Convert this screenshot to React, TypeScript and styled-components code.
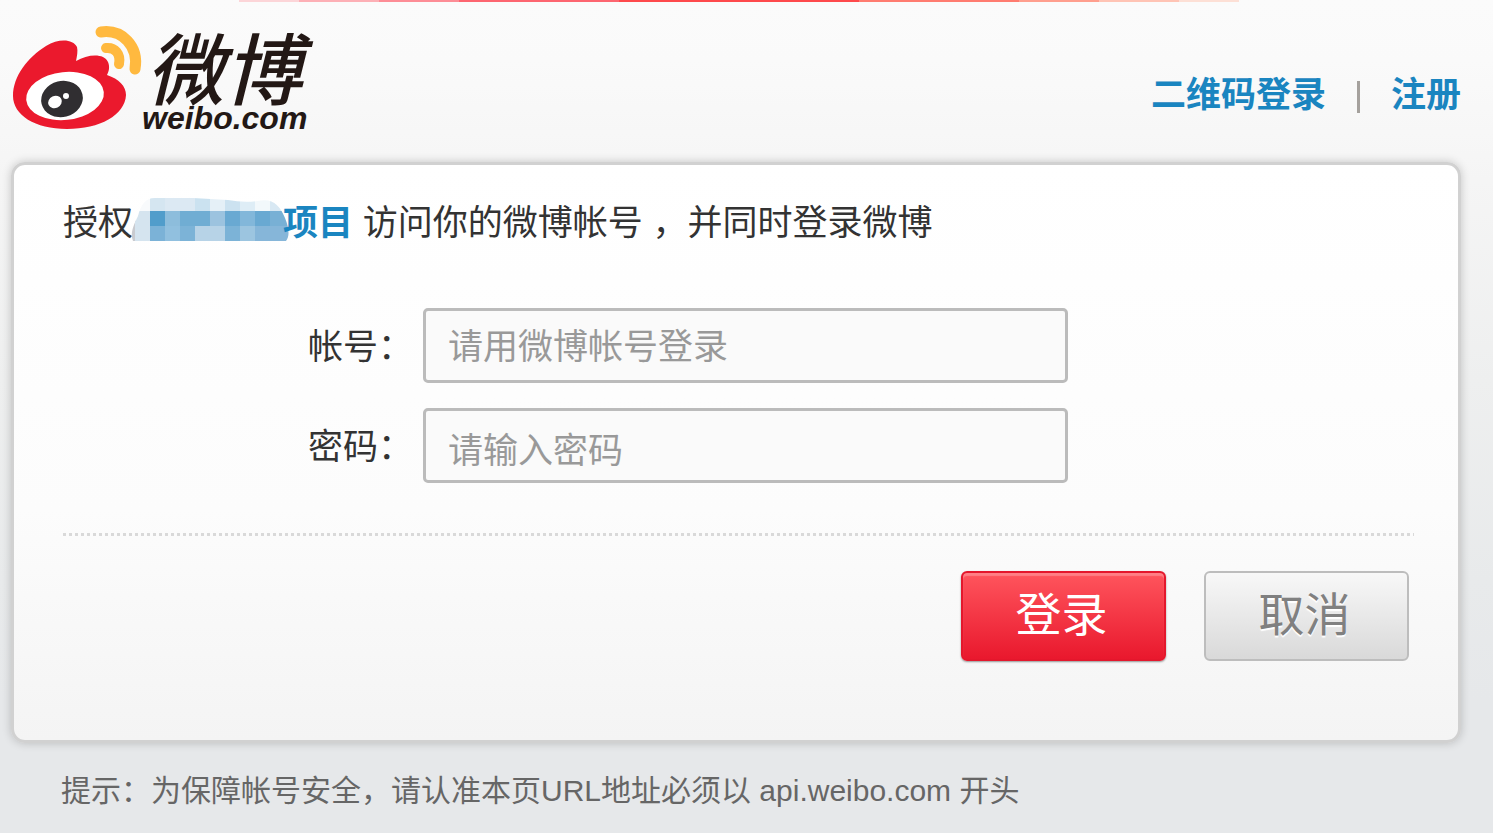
import React from "react";
import styled, { createGlobalStyle, css } from "styled-components";

const GlobalStyle = createGlobalStyle`
  * { box-sizing: border-box; }
  html { min-height: 100%; background: #e6e8ea; }
  body {
    margin: 0;
    font-family: "Liberation Sans", "Noto Sans CJK SC", sans-serif;
    color: #333;
  }
`;

const Page = styled.div`
  min-height: 100vh;
  background: linear-gradient(#fbfbfb 0, #fafafa 60px, #f5f5f5 180px, #eeefef 380px, #e8eaeb 580px, #e6e8ea 700px, #e6e8ea 100%);
`;

const TopBand = styled.div`
  height: 2px;
  width: 67%;
  margin-left: 16%;
  background: linear-gradient(
    90deg,
    #fcd5d8 6%, #fdb0b6 6% 14%, #fd8d96 14% 22%, #fd6670 22% 38%, #fe4a4c 38% 62%,
    #ff7c70 62% 78%, #ff9f8e 78% 86%, #ffc4b5 86% 94%, #fde0d6 94%
  );
`;

const Header = styled.header`
  display: flex;
  justify-content: space-between;
  align-items: flex-start;
  padding: 18px 32px 0 8px;
  height: 160px;
`;

const LogoLink = styled.a`
  display: block;
  line-height: 0;
`;

const TopNav = styled.nav`
  display: flex;
  align-items: center;
  gap: 31px;
  padding-top: 50px;
  font-size: 35px;
  line-height: 50px;
`;

const Link = styled.a`
  color: #1a85c0;
  font-weight: 700;
  text-decoration: none;
`;

const Separator = styled.span`
  width: 3px;
  height: 32px;
  margin-top: 4px;
  background: #a5a19d;
`;

const Card = styled.main`
  margin: 0 32px 0 11px;
  padding: 32px 44px 79px 49px;
  border: 3px solid #d1d1d1;
  border-radius: 14px;
  background: linear-gradient(#fff, #fcfcfc 60%, #f4f4f4);
  background-clip: padding-box;
  box-shadow: 0 0 10px rgba(0, 0, 0, 0.2);
`;

const Title = styled.h1`
  display: flex;
  align-items: center;
  margin: 0;
  font-size: 35px;
  font-weight: 400;
  line-height: 52px;
  white-space: pre;
`;

const AppLink = styled(Link)`
  display: flex;
  align-items: center;
`;

const Mosaic = styled.svg`
  width: 150px;
  height: 43px;
  margin-bottom: 8px;
  overflow: visible;
`;

const Fields = styled.div`
  display: grid;
  gap: 25px;
  padding: 59px 0 50px 245px;
`;

const Field = styled.div`
  display: flex;
  align-items: center;
  gap: 10px;
`;

const Label = styled.label`
  flex: none;
  padding-top: 2px;
  font-size: 35px;
  line-height: 50px;
`;

const Input = styled.input<{ $drop?: number }>`
  width: 100%;
  max-width: 645px;
  height: 75px;
  padding: ${(p) => p.$drop ?? 2}px 22px 0;
  border: 3px solid #bbb;
  border-radius: 5px;
  background: #fafafa;
  font: 35px/50px "Liberation Sans", "Noto Sans CJK SC", sans-serif;
  color: #333;
  outline: none;
  &::placeholder { color: #999; opacity: 1; }
`;

const Divider = styled.hr`
  height: 3px;
  margin: 0;
  border: 0;
  background: repeating-linear-gradient(90deg, #d9d9d9 0 3px, transparent 3px 6px);
`;

const Actions = styled.div`
  display: flex;
  justify-content: flex-end;
  gap: 38px;
  padding: 35px 5px 0 0;
`;

const Button = styled.button<{ $primary?: boolean }>`
  width: 205px;
  height: 90px;
  padding: 0 4px 2px 0;
  border-radius: 6px;
  font: 46px/84px "Liberation Sans", "Noto Sans CJK SC", sans-serif;
  cursor: pointer;
  ${(p) =>
    p.$primary
      ? css`
          border: 2px solid #e4172c;
          background: linear-gradient(#ff555d, #e9182d);
          color: #fff;
          box-shadow: inset 0 3px 1px rgba(255, 255, 255, 0.25), 0 1px 2px rgba(0, 0, 0, 0.4);
        `
      : css`
          border: 2px solid #bdbdbd;
          background: linear-gradient(#f8f8f8, #d9d9d9);
          color: #808080;
          text-shadow: 0 2px 1px #fff;
        `}
`;

const Tip = styled.footer`
  padding: 25px 61px 20px;
  font-size: 30px;
  line-height: 45px;
  color: #666;
`;

const mosaicRows = [
  { y: 0, h: 13, colors: ["#f8fafc", "#d5e6f1", "#dce9f3", "#dce9f3", "#cbe2f0", "#e5f0f7", "#cce2f0", "#deedf6", "#f2f8fb", "#d8e8f3", "#d8e8f3"] },
  { y: 13, h: 15, colors: ["#d5e4ef", "#519dcb", "#8dbddc", "#70add3", "#70add3", "#9cc3df", "#69a9d2", "#82b7da", "#69a9d2", "#78b0d5", "#78b0d5"] },
  { y: 28, h: 15, colors: ["#d5e4ef", "#7bb2d7", "#91c0df", "#7cb3d7", "#b7d3e7", "#b7d3e7", "#7cb3d7", "#9cc5e0", "#86b6d9", "#86b6d9", "#86b6d9"] },
];

const LogoArt = styled.svg`
  overflow: visible;
`;

function Logo() {
  return (
    <LogoArt width="312" height="120" viewBox="8 20 312 120" role="img" aria-label="微博 weibo.com">
      <path fill="#eb192d" d="M13 96C13 76 28 57 46 46C59 38 73 39 77 47C78 51 77 56 76 61C88 54 104 53 108 62C110 67 109 71 107 75C119 79 126 86 126 95C125 115 100 129 67 129C35 129 13 115 13 96Z" />
      <ellipse cx="65" cy="96" rx="39" ry="24" transform="rotate(-6 65 96)" fill="#fff" />
      <ellipse cx="62" cy="99" rx="21" ry="18" transform="rotate(-14 62 99)" fill="#302e31" />
      <ellipse cx="55" cy="102" rx="7" ry="6" transform="rotate(-25 55 102)" fill="#fff" />
      <circle cx="66" cy="96" r="3" fill="#fff" />
      <g fill="none" stroke="#ffb93f" strokeWidth="11" strokeLinecap="round">
        <path d="M101 32C122 29 139 46 135 69" />
        <path d="M106 48C115 47 121 54 119 64" strokeWidth="10" />
      </g>
      <text x="146" y="99" fontSize="78" fontStyle="italic" fontWeight="500" fill="#231815" fontFamily="Noto Sans CJK SC, sans-serif">微博</text>
      <text x="142" y="129" fontSize="32" fontStyle="italic" fontWeight="700" fill="#231815" fontFamily="Liberation Sans, sans-serif">weibo.com</text>
    </LogoArt>
  );
}

export default function App() {
  return (
    <Page>
      <GlobalStyle />
      <TopBand />
      <Header>
        <LogoLink href="#"><Logo /></LogoLink>
        <TopNav>
          <Link href="#">二维码登录</Link>
          <Separator />
          <Link href="#">注册</Link>
        </TopNav>
      </Header>
      <Card>
        <Title>
          <span>授权</span>
          <AppLink href="#">
            <Mosaic viewBox="0 0 150 43" aria-hidden="true">
              <defs>
                <clipPath id="blob">
                  <path d="M0 43C-3 36 0 28 5 18C8 7 12 0 22 0H60L95 2Q110 5 125 3C140 0 147 8 152 20C156 30 157 38 153 43Z" />
                </clipPath>
              </defs>
              <g clipPath="url(#blob)" shapeRendering="crispEdges">
                <rect x="-3" y="13" width="6" height="30" fill="#c9cbd0" />
                {mosaicRows.map((row) =>
                  row.colors.map((c, i) => (
                    <rect key={`${row.y}-${i}`} x={2 + i * 15} y={row.y} width="15" height={row.h} fill={c} />
                  )),
                )}
              </g>
            </Mosaic>
            <span>项目</span>
          </AppLink>
          <span>{" 访问你的微博帐号 ，并同时登录微博"}</span>
        </Title>
        <form onSubmit={(e) => e.preventDefault()}>
          <Fields>
            <Field>
              <Label htmlFor="account">帐号：</Label>
              <Input id="account" type="text" placeholder="请用微博帐号登录" />
            </Field>
            <Field>
              <Label htmlFor="password">密码：</Label>
              <Input id="password" type="password" placeholder="请输入密码" $drop={10} />
            </Field>
          </Fields>
          <Divider />
          <Actions>
            <Button type="submit" $primary>登录</Button>
            <Button type="button">取消</Button>
          </Actions>
        </form>
      </Card>
      <Tip>提示：为保障帐号安全，请认准本页URL地址必须以 api.weibo.com 开头</Tip>
    </Page>
  );
}
